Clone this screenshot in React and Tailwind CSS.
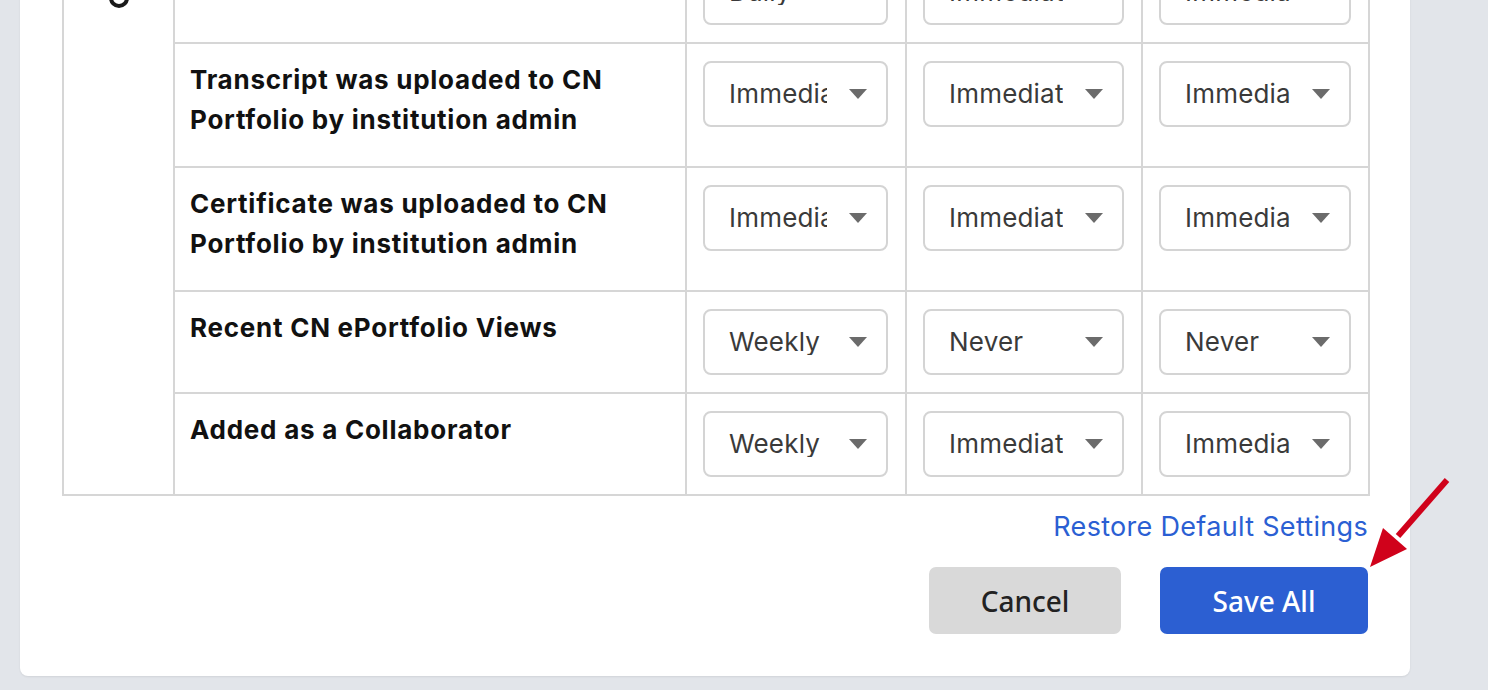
import React from 'react';

const rows = [
  { label: 'Comment Added', values: ['Daily', 'Immediately', 'Immediately'] },
  { label: 'Transcript was uploaded to CN Portfolio by institution admin', values: ['Immediately', 'Immediately', 'Immediately'] },
  { label: 'Certificate was uploaded to CN Portfolio by institution admin', values: ['Immediately', 'Immediately', 'Immediately'] },
  { label: 'Recent CN ePortfolio Views', values: ['Weekly', 'Never', 'Never'] },
  { label: 'Added as a Collaborator', values: ['Weekly', 'Immediately', 'Immediately'] },
];

const FakeSelect = ({ value }) => (
  <div className="h-[66px] w-full flex items-center border-2 border-[#d4d4d4] rounded-[8px] bg-white pl-[24px] pr-[19px]">
    <span className="flex-1 overflow-hidden whitespace-nowrap text-[26px] tracking-[0.2px] text-[#3a3a3a] leading-none">{value}</span>
    <span className="ml-[22px] w-0 h-0 border-l-[9px] border-r-[9px] border-t-[10px] border-l-transparent border-r-transparent border-t-[#6b6b6b]" />
  </div>
);

const App = () => {
  return (
    <div className="relative h-[690px] overflow-hidden bg-[#e2e5ea] pl-[20px]" style={{ fontFamily: 'Inter, "Liberation Sans", sans-serif' }}>
      <div className="w-[1390px] -mt-[60px] bg-white rounded-b-[8px] shadow-[0_1px_2px_rgba(0,0,0,0.08)] px-[42px] pb-[42px]">
        <table className="w-[1306px] table-fixed border-collapse">
          <colgroup>
            <col className="w-[111px]" />
            <col className="w-[512px]" />
            <col className="w-[220px]" />
            <col className="w-[236px]" />
            <col className="w-[227px]" />
          </colgroup>
          <tbody>
            {rows.map((row, i) => (
              <tr key={i}>
                {i === 0 && (
                  <td rowSpan={5} className="border-2 border-[#d6d6d6] align-top">
                    <div className="flex justify-center pt-[46px]">
                      <div className="w-[20px] h-[20px] rounded-full border-[4px] border-[#1a1a1a]" />
                    </div>
                  </td>
                )}
                <td className="border-2 border-[#d6d6d6] align-top pl-[15px] pr-[10px] pt-[16px] pb-[26px] text-[26px] leading-[40px] font-bold tracking-[0.75px] text-[#111]">
                  {row.label}
                </td>
                {row.values.map((v, j) => (
                  <td key={j} className="border-2 border-[#d6d6d6] align-top py-[17px] pl-[16px] pr-[17px]">
                    <FakeSelect value={v} />
                  </td>
                ))}
              </tr>
            ))}
          </tbody>
        </table>

        <div className="flex justify-end mt-[11px]">
          <a href="#" className="text-[27px] leading-[40px] tracking-[0.3px] text-[#2b5fd3]">Restore Default Settings</a>
        </div>

        <div className="flex justify-end gap-[39px] mt-[20px]" style={{ fontFamily: '"Noto Sans", "Open Sans", sans-serif' }}>
          <button className="w-[192px] h-[67px] rounded-[7px] bg-[#d9d9d9] text-[28px] font-medium text-[#222]">Cancel</button>
          <button className="w-[208px] h-[67px] rounded-[7px] bg-[#2c5fd2] text-[28px] font-medium text-white">Save All</button>
        </div>
      </div>

      <svg className="absolute left-[1360px] top-[470px]" width="100" height="110" viewBox="0 0 100 110">
        <line x1="87" y1="10" x2="38" y2="66" stroke="#d0021b" strokeWidth="6" />
        <polygon points="10,97 23,58 47,79" fill="#d0021b" />
      </svg>
    </div>
  );
};

export default App;
